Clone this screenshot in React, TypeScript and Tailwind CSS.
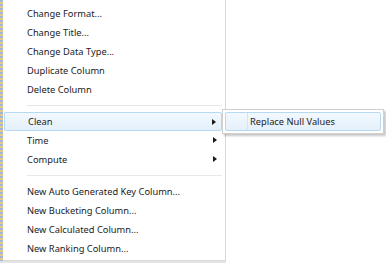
const font = { fontFamily: '"Noto Sans", "Open Sans", sans-serif' };

type Item = { label: string; sub?: boolean; active?: boolean } | "sep";

const items: Item[] = [
  { label: "Change Format..." },
  { label: "Change Title..." },
  { label: "Change Data Type..." },
  { label: "Duplicate Column" },
  { label: "Delete Column" },
  "sep",
  { label: "Clean", sub: true, active: true },
  { label: "Time", sub: true },
  { label: "Compute", sub: true },
  "sep",
  { label: "New Auto Generated Key Column..." },
  { label: "New Bucketing Column..." },
  { label: "New Calculated Column..." },
  { label: "New Ranking Column..." },
];

const Arrow = () => (
  <svg width="4" height="6" viewBox="0 0 4 6" className="absolute right-[5px] top-[6px]">
    <path d="M0 0 L4 3 L0 6 Z" fill="#1a1a1a" />
  </svg>
);

export default function App() {
  return (
    <div className="relative h-[263px] w-[386px] overflow-hidden bg-white text-[9.3px] text-[#1b1b1b]" style={font}>
      <div className="flex h-[261px]">
        <div className="w-[3px] bg-[repeating-linear-gradient(to_bottom,#9fb7d6_0px,#9fb7d6_2px,#e6c98a_2px,#e6c98a_4px)]" />
        <div className="flex w-[223px] flex-col border-b border-r border-[#dcd8d8] bg-white pb-[2px] pl-[1px] pr-[3px] pt-[4px]">
          {items.map((it, i) =>
            it === "sep" ? (
              <div key={i} className="flex h-[13px] items-center pl-[23px]">
                <div className="h-px w-full bg-[#e8e8e8]" />
              </div>
            ) : (
              <div
                key={i}
                className={`relative flex h-[19px] items-center whitespace-nowrap pl-[23px] ${
                  it.active ? "rounded-[2px] border border-[#b4d9f0] bg-[linear-gradient(to_bottom,#f2f8fe,#e4f0fb)] pl-[22px]" : ""
                }`}
              >
                <span className="leading-none">{it.label}</span>
                {it.sub && <Arrow />}
              </div>
            )
          )}
        </div>
      </div>
      <div className="h-[2px] w-[226px] bg-[#e4e4e4]" />

      <div className="absolute left-[222px] top-[109px] w-[162px] border border-[#cfcfcf] bg-white p-[2px] shadow-[2px_2px_2px_rgba(0,0,0,0.22)]">
        <div className="relative flex h-[19px] items-center whitespace-nowrap rounded-[2px] border border-[#b4d9f0] bg-[linear-gradient(to_bottom,#f2f8fe,#e4f0fb)] pl-[24px]">
          <div className="absolute left-[21px] top-0 h-full w-px bg-[#d5e4f0]" />
          <span className="leading-none">Replace Null Values</span>
        </div>
      </div>
    </div>
  );
}
